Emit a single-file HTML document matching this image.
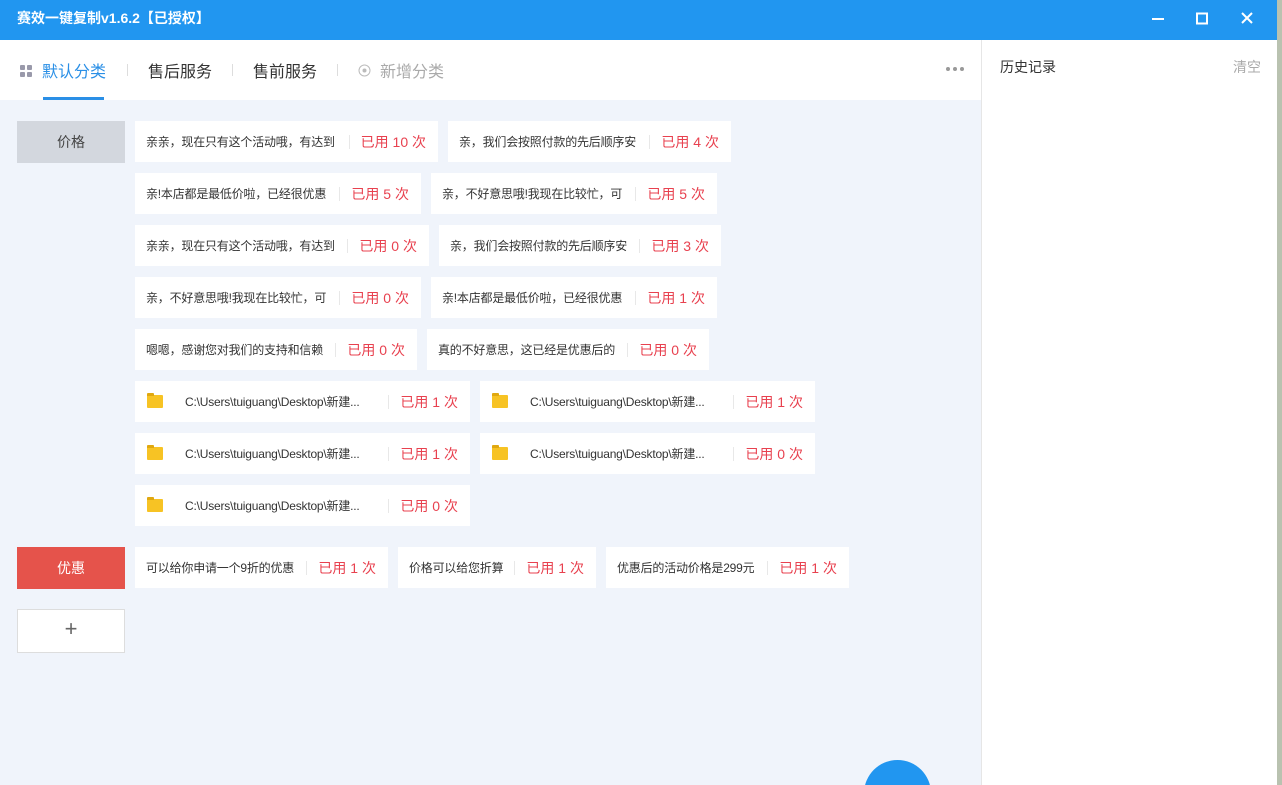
<!DOCTYPE html><html><head><meta charset="utf-8"><style>
*{margin:0;padding:0;box-sizing:border-box}
body{width:1282px;height:785px;overflow:hidden;background:#b9c2b0;font-family:"Liberation Sans","Noto Sans CJK SC",sans-serif;position:relative}
.win{position:absolute;left:0;top:0;width:1277px;height:785px;background:#f0f4fb;overflow:hidden}
.title{position:absolute;left:0;top:0;width:1277px;height:40px;background:#2196f0;color:#fff;font-size:14px;font-weight:bold;line-height:36px;padding-left:17px}
.tabs{position:absolute;left:0;top:40px;width:982px;height:60px;background:#fff}
.tab{position:absolute;top:18px;font-size:16px;color:#333}
.sep{position:absolute;top:24px;width:1px;height:12px;background:#ddd}
.side{position:absolute;left:981px;top:40px;width:296px;height:745px;background:#fff;border-left:1px solid #e6e6e6}
.it{position:absolute;height:41px;background:#fff;display:flex;align-items:center;font-size:12px;color:#333;padding-left:11px;overflow:hidden}
.it .c{margin-left:auto;color:#e8414f;font-size:14px;padding-right:12px;border-left:1px solid #e8e8e8;padding-left:11px;line-height:14px;white-space:nowrap;flex-shrink:0}
.it .t{white-space:nowrap;margin-right:10px;overflow:hidden;flex-shrink:1;letter-spacing:-0.2px}
.cat{position:absolute;left:17px;width:108px;height:42px;font-size:14px;text-align:center;line-height:42px}
.fold{width:16px;height:13px;background:#f7c324;border-radius:1px;margin:0 22px 0 1px;position:relative;flex-shrink:0}
.fold:before{content:"";position:absolute;left:0;top:-2px;width:7px;height:3px;background:#e0a810;border-radius:1px 1px 0 0}
</style></head><body><div class="win">
<div class="title">赛效一键复制v1.6.2【已授权】</div>
<svg style="position:absolute;left:1150px;top:12px" width="110" height="16"><path d="M2 7h12" stroke="#fff" stroke-width="2"/><rect x="47" y="1.5" width="10" height="10" fill="none" stroke="#fff" stroke-width="2"/><path d="M92 1l10 10M102 1l-10 10" stroke="#fff" stroke-width="2"/></svg>
<div class="tabs">
<svg style="position:absolute;left:20px;top:25px" width="12" height="12"><rect x="0" y="0" width="5" height="5" rx="1" fill="#99a"/><rect x="7" y="0" width="5" height="5" rx="1" fill="#99a"/><rect x="0" y="7" width="5" height="5" rx="1" fill="#99a"/><rect x="7" y="7" width="5" height="5" rx="1" fill="#99a"/></svg>
<div class="tab" style="left:42px;color:#2a8fe6">默认分类</div>
<div style="position:absolute;left:43px;top:57px;width:61px;height:3px;background:#2a8fe6"></div>
<div class="sep" style="left:127px"></div>
<div class="tab" style="left:148px">售后服务</div>
<div class="sep" style="left:232px"></div>
<div class="tab" style="left:253px">售前服务</div>
<div class="sep" style="left:337px"></div>
<svg style="position:absolute;left:358px;top:24px" width="13" height="13"><circle cx="6.5" cy="6.5" r="5.5" fill="none" stroke="#bbb"/><circle cx="6.5" cy="6.5" r="2" fill="#bbb"/></svg>
<div class="tab" style="left:380px;color:#aaa">新增分类</div>
<div style="position:absolute;left:946px;top:27px;font-size:0"><span style="display:inline-block;width:4px;height:4px;border-radius:2px;background:#999;margin-right:3px"></span><span style="display:inline-block;width:4px;height:4px;border-radius:2px;background:#999;margin-right:3px"></span><span style="display:inline-block;width:4px;height:4px;border-radius:2px;background:#999"></span></div>
</div>
<div class="side"><div style="position:absolute;left:18px;top:17px;font-size:14px;color:#333">历史记录</div><div style="position:absolute;right:16px;top:17px;font-size:14px;color:#aaa">清空</div></div>

<div class="cat" style="top:121px;background:#d3d7de;color:#444">价格</div>
<div class="it" style="left:135px;top:121px;width:303px"><span class="t">亲亲，现在只有这个活动哦，有达到</span><span class="c">已用 10 次</span></div>
<div class="it" style="left:448px;top:121px;width:283px"><span class="t">亲，我们会按照付款的先后顺序安</span><span class="c">已用 4 次</span></div>
<div class="it" style="left:135px;top:173px;width:286px"><span class="t">亲!本店都是最低价啦，已经很优惠</span><span class="c">已用 5 次</span></div>
<div class="it" style="left:431px;top:173px;width:286px"><span class="t">亲，不好意思哦!我现在比较忙，可</span><span class="c">已用 5 次</span></div>
<div class="it" style="left:135px;top:225px;width:294px"><span class="t">亲亲，现在只有这个活动哦，有达到</span><span class="c">已用 0 次</span></div>
<div class="it" style="left:439px;top:225px;width:282px"><span class="t">亲，我们会按照付款的先后顺序安</span><span class="c">已用 3 次</span></div>
<div class="it" style="left:135px;top:277px;width:286px"><span class="t">亲，不好意思哦!我现在比较忙，可</span><span class="c">已用 0 次</span></div>
<div class="it" style="left:431px;top:277px;width:286px"><span class="t">亲!本店都是最低价啦，已经很优惠</span><span class="c">已用 1 次</span></div>
<div class="it" style="left:135px;top:329px;width:282px"><span class="t">嗯嗯，感谢您对我们的支持和信赖</span><span class="c">已用 0 次</span></div>
<div class="it" style="left:427px;top:329px;width:282px"><span class="t">真的不好意思，这已经是优惠后的</span><span class="c">已用 0 次</span></div>
<div class="it" style="left:135px;top:381px;width:335px"><span class="fold"></span><span class="t">C:\Users\tuiguang\Desktop\新建...</span><span class="c">已用 1 次</span></div>
<div class="it" style="left:480px;top:381px;width:335px"><span class="fold"></span><span class="t">C:\Users\tuiguang\Desktop\新建...</span><span class="c">已用 1 次</span></div>
<div class="it" style="left:135px;top:433px;width:335px"><span class="fold"></span><span class="t">C:\Users\tuiguang\Desktop\新建...</span><span class="c">已用 1 次</span></div>
<div class="it" style="left:480px;top:433px;width:335px"><span class="fold"></span><span class="t">C:\Users\tuiguang\Desktop\新建...</span><span class="c">已用 0 次</span></div>
<div class="it" style="left:135px;top:485px;width:335px"><span class="fold"></span><span class="t">C:\Users\tuiguang\Desktop\新建...</span><span class="c">已用 0 次</span></div>

<div class="cat" style="top:547px;background:#e5534b;color:#fff">优惠</div>
<div class="it" style="left:135px;top:547px;width:253px"><span class="t">可以给你申请一个9折的优惠</span><span class="c">已用 1 次</span></div>
<div class="it" style="left:398px;top:547px;width:198px"><span class="t">价格可以给您折算</span><span class="c">已用 1 次</span></div>
<div class="it" style="left:606px;top:547px;width:243px"><span class="t">优惠后的活动价格是299元</span><span class="c">已用 1 次</span></div>

<div class="cat" style="top:609px;height:44px;background:#fff;border:1px solid #ddd;color:#666;font-size:22px;line-height:38px;font-weight:300">+</div>
<div style="position:absolute;left:864px;top:760px;width:67px;height:67px;border-radius:50%;background:#2196f0"></div>
</div></body></html>
